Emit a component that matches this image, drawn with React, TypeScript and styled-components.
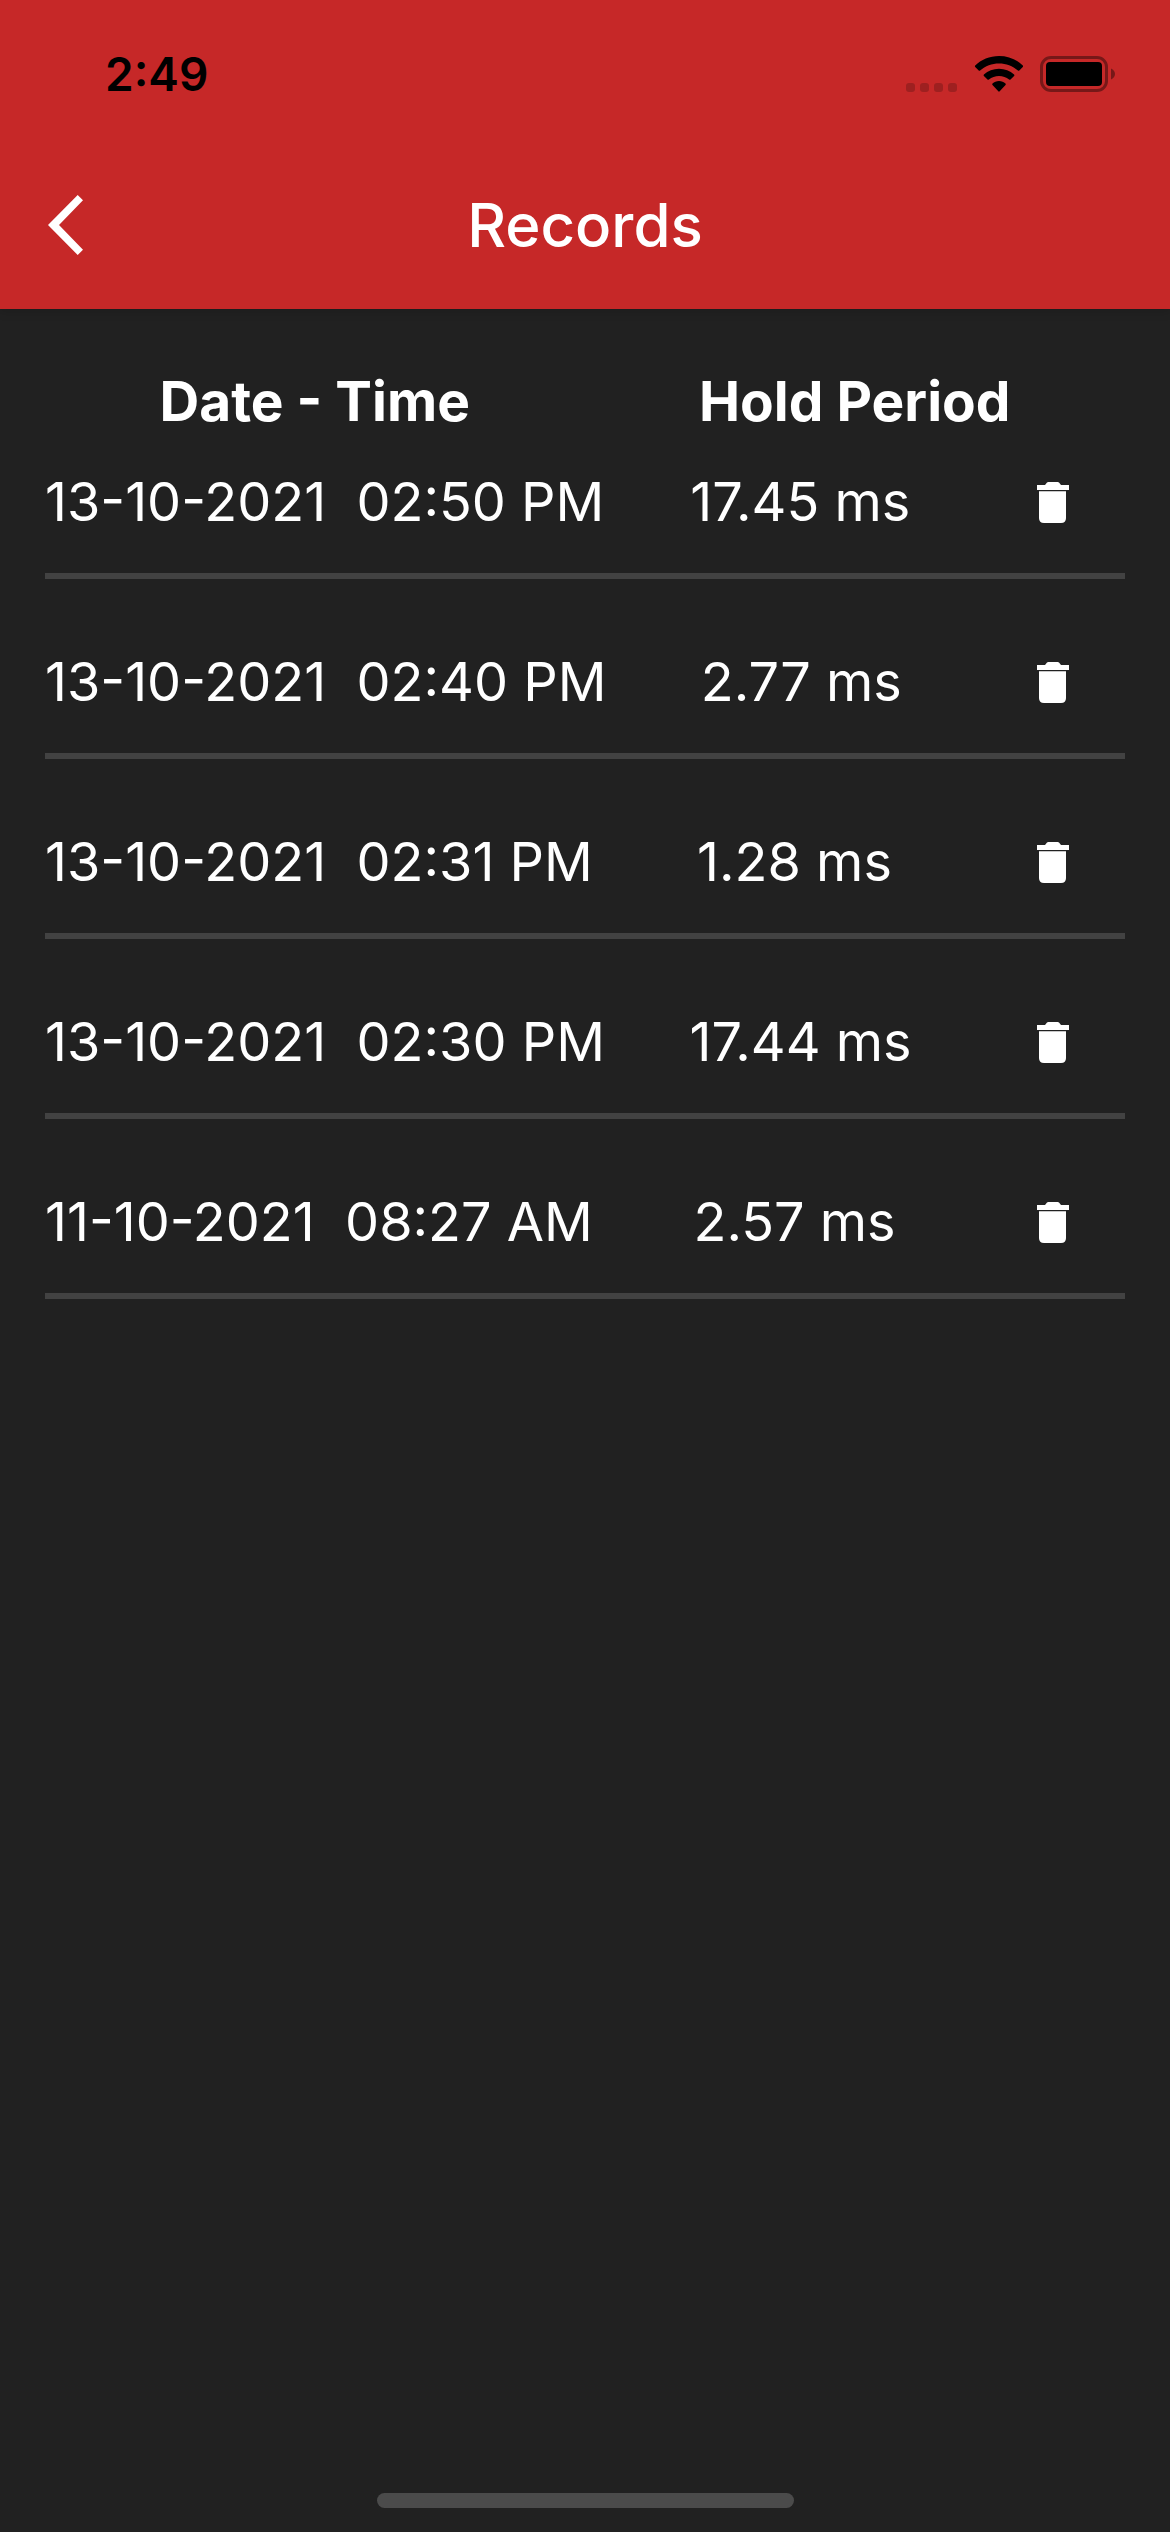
import React, { useState } from "react";
import styled, { createGlobalStyle } from "styled-components";

const GlobalStyle = createGlobalStyle`
  *, *::before, *::after { box-sizing: border-box; }
  body {
    margin: 0;
    background: #212121;
    color: #fff;
    font-family: Inter, "Liberation Sans", sans-serif;
  }
  button {
    padding: 0;
    border: 0;
    background: none;
    color: inherit;
    font: inherit;
    cursor: pointer;
  }
`;

const Screen = styled.div`
  display: flex;
  flex-direction: column;
  min-height: 100vh;
`;

const Header = styled.header`
  background: #c62828;
  box-shadow: 0 3px 9px rgba(0, 0, 0, 0.15);
`;

const StatusBar = styled.div`
  display: flex;
  align-items: center;
  justify-content: space-between;
  height: 141px;
  padding: 6px 55px 0 105px;
  color: #000;
`;

const Clock = styled.time`
  font-size: 46px;
  font-weight: 600;
  line-height: 56px;
`;

const StatusIcons = styled.div`
  display: flex;
  align-items: center;
  gap: 16px;
`;

const TitleBar = styled.div`
  display: grid;
  grid-template-columns: 168px 1fr 168px;
  align-items: center;
  height: 168px;
`;

const BackButton = styled.button`
  display: flex;
  align-items: center;
  height: 144px;
  padding-left: 48px;
`;

const Title = styled.h1`
  margin: 0;
  text-align: center;
  font-size: 60px;
  font-weight: 500;
  line-height: 72px;
`;

const Content = styled.main`
  flex: 1;
  padding: 62px 45px 0;
`;

const Table = styled.table`
  display: flex;
  flex-direction: column;
`;

const HeadRow = styled.tr`
  display: flex;
  justify-content: space-around;
`;

const HeadCell = styled.th`
  padding: 0;
  font-size: 55px;
  font-weight: 700;
  line-height: 60px;
`;

const Body = styled.tbody`
  display: flex;
  flex-direction: column;
  gap: 32px;
`;

const Row = styled.tr`
  display: flex;
  align-items: center;
  justify-content: space-between;
  border-bottom: 6px solid #424242;
`;

const Cell = styled.td`
  padding: 0;
  font-size: 54px;
  line-height: 60px;
  white-space: pre;
`;

const DeleteButton = styled.button`
  display: flex;
  align-items: center;
  justify-content: center;
  width: 144px;
  height: 142px;
`;

const HomeArea = styled.footer`
  display: flex;
  justify-content: center;
  padding-bottom: 24px;
`;

const HomeIndicator = styled.div`
  width: 417px;
  height: 15px;
  border-radius: 8px;
  background: #4b4b4b;
`;

const SignalIcon = () => (
  <svg width="52" height="36" viewBox="0 0 52 36" aria-hidden="true">
    {[0, 14, 28, 42].map((x) => (
      <rect key={x} x={x} y="27" width="9" height="9" rx="3" fillOpacity="0.2" />
    ))}
  </svg>
);

const WifiIcon = () => (
  <svg width="50" height="36" viewBox="0 0 50 36" aria-hidden="true">
    <path d="M25 0C15.700 0 7 3.500 1.200 9.600Q.6 10.300 1.200 11L4.700 14.500Q5.400 15.200 6.100 14.500C11.300 9.800 17.900 7.400 25 7.400S38.700 9.800 43.900 14.500Q44.600 15.200 45.300 14.500L48.800 11Q49.400 10.300 48.800 9.600C43 3.500 34.300 0 25 0Z" />
    <path d="M25 12.700C19.200 12.700 14 14.800 9.900 18.500Q9.200 19.200 9.900 19.900L13.500 23.500Q14.200 24.200 14.900 23.500C17.700 21.200 21.200 19.900 25 19.900S32.300 21.200 35.100 23.500Q35.800 24.200 36.500 23.500L40.100 19.900Q40.800 19.200 40.100 18.500C36 14.800 30.800 12.700 25 12.700Z" />
    <path d="M25 25C22.400 25 20.200 25.900 18.500 27.500Q17.800 28.200 18.500 28.900L24.300 35.300Q25 36 25.700 35.300L31.500 28.900Q32.200 28.200 31.500 27.500C29.800 25.900 27.600 25 25 25Z" />
  </svg>
);

const BatteryIcon = () => (
  <svg width="75" height="36" viewBox="0 0 75 36" aria-hidden="true">
    <rect x="1.500" y="1.500" width="65" height="33" rx="9.500" fill="none" stroke="#000" strokeOpacity="0.4" strokeWidth="3" />
    <rect x="6" y="6" width="56" height="24" rx="4" />
    <path d="M71 12.500C73.400 13.400 75 15.600 75 18S73.400 22.600 71 23.500Z" fillOpacity="0.4" />
  </svg>
);

const ChevronIcon = () => (
  <svg width="35" height="60" viewBox="0 0 35 60" fill="currentColor" aria-hidden="true">
    <path d="M29.700 0 0 30 29.700 60 35 54.700 11 30 35 5.300Z" />
  </svg>
);

const TrashIcon = () => (
  <svg width="32" height="41" viewBox="0 0 32 41" fill="currentColor" aria-hidden="true">
    <path d="M0 3H8L10 .6Q10.500 0 11.300 0H20.700Q21.500 0 22 .6L24 3H32V8H0Z" />
    <path d="M2 9.300H29V36Q29 41 24 41H7Q2 41 2 36Z" />
  </svg>
);

interface RecordEntry {
  date: string;
  time: string;
  hold: string;
}

const initialRecords: RecordEntry[] = [
  { date: "13-10-2021", time: "02:50 PM", hold: "17.45 ms" },
  { date: "13-10-2021", time: "02:40 PM", hold: "2.77 ms" },
  { date: "13-10-2021", time: "02:31 PM", hold: "1.28 ms" },
  { date: "13-10-2021", time: "02:30 PM", hold: "17.44 ms" },
  { date: "11-10-2021", time: "08:27 AM", hold: "2.57 ms" },
];

export default function App() {
  const [records, setRecords] = useState(initialRecords);
  const remove = (entry: RecordEntry) =>
    setRecords((current) => current.filter((item) => item !== entry));

  return (
    <Screen>
      <GlobalStyle />
      <Header>
        <StatusBar>
          <Clock>2:49</Clock>
          <StatusIcons>
            <SignalIcon />
            <WifiIcon />
            <BatteryIcon />
          </StatusIcons>
        </StatusBar>
        <TitleBar>
          <BackButton type="button" aria-label="Back">
            <ChevronIcon />
          </BackButton>
          <Title>Records</Title>
        </TitleBar>
      </Header>
      <Content>
        <Table>
          <thead>
            <HeadRow>
              <HeadCell scope="col">Date - Time</HeadCell>
              <HeadCell scope="col">Hold Period</HeadCell>
            </HeadRow>
          </thead>
          <Body>
            {records.map((entry) => (
              <Row key={`${entry.date} ${entry.time}`}>
                <Cell>{`${entry.date}  ${entry.time} `}</Cell>
                <Cell>{entry.hold}</Cell>
                <Cell>
                  <DeleteButton type="button" aria-label="Delete record" onClick={() => remove(entry)}>
                    <TrashIcon />
                  </DeleteButton>
                </Cell>
              </Row>
            ))}
          </Body>
        </Table>
      </Content>
      <HomeArea>
        <HomeIndicator />
      </HomeArea>
    </Screen>
  );
}
